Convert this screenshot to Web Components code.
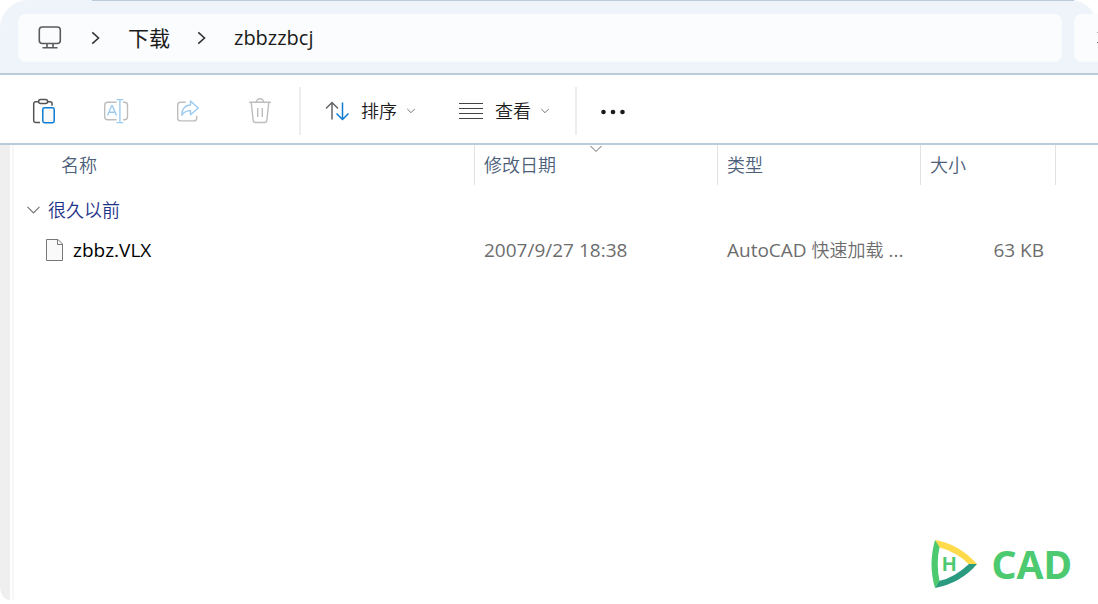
<!DOCTYPE html>
<html lang="zh-CN">
<head>
<meta charset="utf-8">
<title>zbbzzbcj</title>
<style>
html,body{margin:0;background:#fff}
body{font-family:"Open Sans","Noto Sans CJK SC",sans-serif;color:#1b1b1b}
</style>
</head>
<body>
<file-explorer>
  <address-bar slot="top"></address-bar>
  <command-bar slot="commands">
    <tool-button label="粘贴"><svg viewBox="0 0 28 28" width="28" height="28" fill="none" stroke-width="1.5"><path d="M8.5 4.7H5.7A2 2 0 0 0 3.7 6.7V23.5a2 2 0 0 0 2 2H10M18 4.7h2.1a2 2 0 0 1 2 2v2" stroke="#555"/><rect x="8.6" y="2.6" width="9" height="4" rx="2" stroke="#555"/><rect x="12.8" y="10.7" width="11.4" height="15" rx="1.6" fill="#fafafa" stroke="#0f7cd4"/></svg></tool-button>
    <tool-button label="重命名" off><svg viewBox="0 0 28 28" width="28" height="28" fill="none" stroke-width="1.4"><path d="M14.6 5.2H5.7a3 3 0 0 0-3 3v11.6a3 3 0 0 0 3 3h8.9M21 5.2h1.5a3 3 0 0 1 3 3v11.6a3 3 0 0 1-3 3H21" stroke="#bdbdbd"/><path d="M5.5 18.6l4.2-10h.6l4.2 10M7 15.3h6M14.5 2.6h6.8M14.5 25.6h6.8M17.9 2.6v23" stroke="#9dcbef"/></svg></tool-button>
    <tool-button label="共享" off><svg viewBox="0 0 28 28" width="28" height="28" fill="none" stroke-width="1.4"><path d="M11.7 5.2H6.7a3 3 0 0 0-3 3v12.7a3 3 0 0 0 3 3h13a3 3 0 0 0 3-3v-2.2" stroke="#bdbdbd"/><path d="M16.5 8V4l7.8 7-7.8 6.8v-4.2c-4.2 0-6.6 1.3-8.7 4.6.1-6 3-9.9 8.7-10.2z" stroke="#9dcbef" stroke-linejoin="round"/></svg></tool-button>
    <tool-button label="删除" off><svg viewBox="0 0 28 28" width="28" height="28" fill="none" stroke="#bdbdbd" stroke-width="1.4"><path d="M3.2 5.3h21.6M10.5 5.2a3.4 3.4 0 0 1 7 0M5.2 5.5l2 18a2.2 2.2 0 0 0 2.2 2h9.2a2.2 2.2 0 0 0 2.2-2l2-18M11.7 11v9M16.3 11v9"/></svg></tool-button>
    <menu-button slot="menus"><svg slot="icon" viewBox="0 0 24 24" width="24" height="24" fill="none" stroke-width="1.5"><path d="M1 9.5l6-6 6 6M7 3.8V20.500" stroke="#666"/><path d="M11.500 14.500l6 6 6-6M17.500 20.200V3.500" stroke="#0f7cd4"/></svg>排序</menu-button>
    <menu-button slot="menus"><svg slot="icon" viewBox="0 0 24 24" width="24" height="24" stroke="#444" stroke-width="1.2"><path d="M0 4.500h24M0 9.500h24M0 14.500h24M0 19.500h24"/></svg>查看</menu-button>
  </command-bar>
  <file-list slot="content"></file-list>
  <cad-brand slot="brand">CAD</cad-brand>
</file-explorer>

<script>
function define(name, html, setup) {
  const t = document.createElement('template');
  t.innerHTML = html;
  customElements.define(name, class extends HTMLElement {
    constructor() {
      super();
      this.attachShadow({mode: 'open'}).append(t.content.cloneNode(true));
    }
    connectedCallback() { if (setup) setup(this, this.shadowRoot); }
  });
}

define('file-explorer', `<style>
:host{display:flex;flex-direction:column;min-height:100vh;overflow:hidden}
.body{display:flex;flex:1;margin-bottom:4px}
.rail{width:10px;margin-right:2px;background:#efefef;border-radius:0 0 0 28px/0 0 0 36px}
main{flex:1;min-width:0;display:flex;flex-direction:column;justify-content:space-between;border-left:2px solid #f7f7f7}
</style>
<slot name="top"></slot><slot name="commands"></slot>
<div class="body"><div class="rail"></div><main><slot name="content"></slot><slot name="brand"></slot></main></div>`);

define('address-bar', `<style>
:host{display:block;position:relative}
header{display:flex;gap:12px;background:#eef4f9;padding:14px 0 11px 18px;border-radius:28px 28px 0 0;border-bottom:2px solid #bccbda}
header::before{content:"";position:absolute;left:92px;right:24px;top:0;height:1px;background:#bccbda}
nav{flex:1;display:flex;align-items:center;gap:27px;height:48px;padding-left:20px;background:#fbfcfe;border-radius:8px}
a{color:#1b1b1b;text-decoration:none;font-size:21px;line-height:28px}
a.home{height:24px;padding-right:2px}
a.current{font-size:20px}
svg{display:block}
form{display:flex;width:24px;overflow:hidden;background:#fbfcfe;border-radius:8px 0 0 8px;align-items:center}
input{flex:1;min-width:0;border:0;background:none;padding:0;outline:0}
</style>
<header><nav aria-label="路径">
<a class="home" href="#pc" aria-label="此电脑"><svg viewBox="0 0 24 24" width="24" height="24" fill="none" stroke="#5a5a5a" stroke-width="1.6"><rect x="1.300" y="1" width="21" height="16.500" rx="3"/><path d="M9 17.500v4M15 17.500v4M4.500 21.800h15"/></svg></a>
<svg viewBox="0 0 10 14" width="10" height="14" fill="none" stroke="#333" stroke-width="1.6"><path d="M1.300 1.300L7.500 7l-6.200 5.700"/></svg>
<a href="#downloads">下载</a>
<svg viewBox="0 0 10 14" width="10" height="14" fill="none" stroke="#333" stroke-width="1.6"><path d="M1.300 1.300L7.500 7l-6.200 5.700"/></svg>
<a class="current" href="#zbbzzbcj">zbbzzbcj</a></nav>
<form><input type="search" aria-label="搜索"><svg viewBox="0 0 1 12" width="1" height="12"><path d="M0 .5h1" stroke="#aaa"/><path d="M0 10.500h1" stroke="#555"/></svg></form></header>`);

define('command-bar', `<style>
:host{display:flex;align-items:center;height:64px;padding:4px 0 0 8px;border-bottom:2px solid #bccbda}
.sep{width:2px;height:48px;background:#ededed}
.group{display:flex}
.group.icons{margin-right:3px}
.menus{gap:44px;padding:0 26px 0 24px}
button{border:0;background:none;padding:0;margin-left:24px;width:24px;height:24px}
svg{display:block}
</style>
<div class="group icons"><slot></slot></div><div class="sep"></div>
<div class="group menus"><slot name="menus"></slot></div><div class="sep"></div>
<button aria-label="更多"><svg viewBox="0 0 24 24" width="24" height="24" fill="#1b1b1b"><circle cx="2.500" cy="13" r="2.300"/><circle cx="12" cy="13" r="2.300"/><circle cx="21.500" cy="13" r="2.300"/></svg></button>`);

define('tool-button', `<style>
:host{display:block;width:72px}
button{display:flex;justify-content:center;width:100%;padding:8px 0;border:0;background:none}
</style><button><slot></slot></button>`, (el, root) => {
  const b = root.querySelector('button');
  b.setAttribute('aria-label', el.getAttribute('label'));
  b.disabled = el.hasAttribute('off');
});

define('menu-button', `<style>
:host{display:block}
button{display:flex;align-items:center;border:0;background:none;padding:0;color:#1b1b1b;font-family:inherit;font-size:18px;line-height:24px;font-weight:350}
.text{margin:0 10px 0 12px}
</style><button aria-haspopup="menu"><slot name="icon"></slot><span class="text"><slot></slot></span>
<svg viewBox="0 0 8 6" width="8" height="6" fill="none" stroke="#777"><path d="M.3 1L4 4.700 7.700 1"/></svg></button>`);

define('file-list', `<style>
:host{display:block}
table{border-collapse:separate;border-spacing:0;table-layout:fixed;width:100%;font-size:18px;line-height:24px}
.name{width:461px}.date{width:243px}.type{width:203px}.size{width:135px}
th{position:relative;box-sizing:border-box;height:40px;padding:0 0 0 9px;text-align:left;font-weight:350;color:#4c607a;border-right:1px solid #e2e2e2}
th:last-child{border:0}
th:first-child{padding-left:47px}
th svg{position:absolute;left:115px;top:0}
tbody td{height:30px;padding:0 0 0 9px;color:#6d6d6d;font-size:19px;white-space:nowrap}
tbody td:first-child{padding-left:32px;color:#000}
.cjk{font-size:18px;font-weight:350}
.file{display:flex;align-items:center;gap:10px}
tbody td.num{text-align:right;padding-right:12px}
tbody td.group:first-child{height:50px;padding:0}
.group button{display:flex;align-items:center;gap:8px;border:0;background:none;padding:0 0 0 13px;font-family:inherit;font-size:18px;line-height:24px;font-weight:350;color:#1e3287}
</style>
<table><colgroup><col class="name"><col class="date"><col class="type"><col class="size"><col></colgroup>
<thead><tr><th scope="col">名称</th><th scope="col" aria-sort="descending">修改日期<svg viewBox="0 0 12 8" width="12" height="8" fill="none" stroke="#666"><path d="M.5 1L6 6.500 11.500 1"/></svg></th><th scope="col">类型</th><th scope="col">大小</th><th></th></tr></thead>
<tbody><tr><td class="group" colspan="5"><button aria-expanded="true"><svg viewBox="0 0 13 8" width="13" height="8" fill="none" stroke="#777" stroke-width="1.200"><path d="M.5 .8l6 6 6-6"/></svg>很久以前</button></td></tr>
<tr><td><div class="file"><svg viewBox="0 0 17 22" width="17" height="22" fill="#fafafa" stroke="#777"><path d="M.5 .5h11.500l4.500 4.500v16.500h-16z"/><path d="M11.500 .5v5h5" fill="none"/></svg>zbbz.VLX</div></td>
<td>2007/9/27 18:38</td><td>AutoCAD <span class="cjk">快速加载</span> ...</td><td class="num">63 KB</td><td></td></tr></tbody></table>`);

define('cad-brand', `<style>
:host{display:flex;align-self:flex-end;align-items:center;gap:14px;margin:0 26px 12px 0;color:#4dca70;font:700 39px/48px "Noto Sans",sans-serif}
svg{display:block}
text{font:700 20px "Liberation Sans",sans-serif;fill:#4dca70}
</style>
<svg viewBox="0 0 47 48" width="47" height="48" role="img" aria-label="H CAD"><path d="M5 0Q29 4 47 24L39 24.500Q27 12 8 7z" fill="#ffdb4c"/><path d="M47 24Q31 43 5 48L9 41Q24 38 39 24z" fill="#2a9a80"/><path d="M5 0L9.500 7Q6 24 9.500 41L5 48Q-2 25 5 0z" fill="#4dca70"/><text x="12" y="31">H</text></svg><span><slot></slot></span>`);
</script>
</body>
</html>
